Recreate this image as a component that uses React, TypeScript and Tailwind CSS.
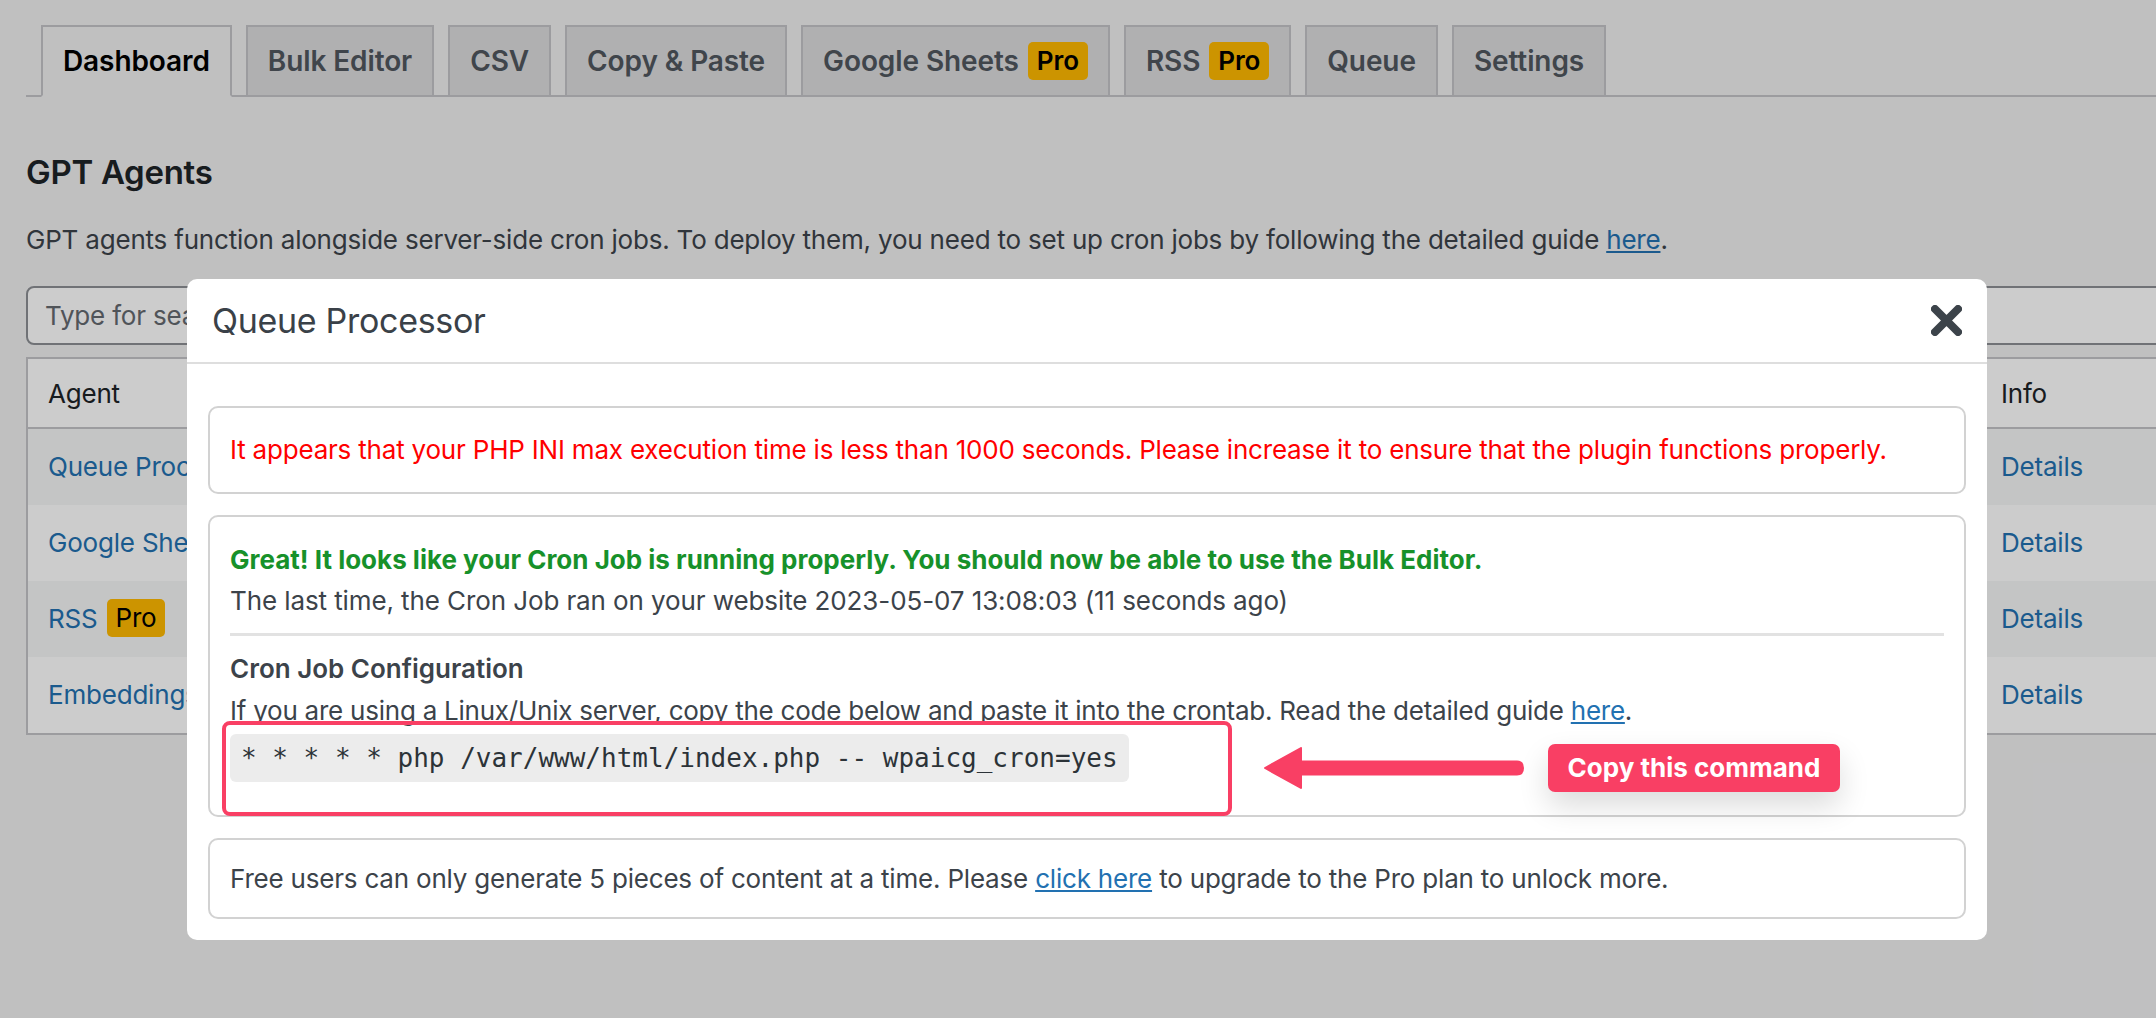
import React from "react";

function ProBadge({ className = "", weight = "font-semibold" }: { className?: string; weight?: string }) {
  return (
    <span
      className={
        "inline-flex h-[38px] items-center rounded-[5px] bg-[#ffb900] px-[9px] text-[26px] leading-none text-black " +
        weight +
        " " +
        className
      }
    >
      Pro
    </span>
  );
}

function Tab({ label, active = false, pro = false }: { label: string; active?: boolean; pro?: boolean }) {
  return (
    <div
      className={
        "-mb-[2px] flex h-[72px] items-center border-2 px-[20px] text-[28px] font-semibold leading-[48px] tracking-[-0.1px] " +
        (active
          ? "border-[#c3c4c7] border-b-[#f0f0f1] bg-[#f0f0f1] text-black"
          : "border-[#c3c4c7] bg-[#dcdcde] text-[#50575e]")
      }
    >
      <span>{label}</span>
      {pro && <ProBadge className="ml-[9px]" />}
    </div>
  );
}

const rows: { name: string; pro?: boolean }[] = [
  { name: "Queue Processor" },
  { name: "Google Sheets" },
  { name: "RSS", pro: true },
  { name: "Embeddings" },
];

export default function App() {
  return (
    <div className="relative h-[1018px] w-full overflow-hidden bg-[#f0f0f1] font-['Inter',sans-serif] text-[26px] tracking-[-0.2px] text-[#3c434a]">
      {/* WordPress admin page */}
      <div className="pl-[26px] pt-[25px]">
        <nav className="flex gap-[14px] border-b-2 border-[#c3c4c7] pl-[15px]">
          <Tab label="Dashboard" active />
          <Tab label="Bulk Editor" />
          <Tab label="CSV" />
          <Tab label="Copy & Paste" />
          <Tab label="Google Sheets" pro />
          <Tab label="RSS" pro />
          <Tab label="Queue" />
          <Tab label="Settings" />
        </nav>

        <h1 className="mt-[55px] text-[33px] font-semibold leading-[40px] tracking-[-0.3px] text-[#1d2327]">
          GPT Agents
        </h1>
        <p className="mt-[28px] leading-[40px] text-[#3c434a]">
          GPT agents function alongside server-side cron jobs. To deploy them, you need to set up cron jobs by following
          the detailed guide <a className="text-[#2271b1] underline">here</a>.
        </p>

        <div className="mt-[26px] flex h-[59px] w-[calc(100%+20px)] items-center rounded-[8px] border-2 border-[#8c8f94] bg-white px-[17px] text-[#646970]">
          Type for search...
        </div>

        <div className="mt-[12px] w-[calc(100%+20px)] border-2 border-[#c3c4c7] bg-white">
          <div className="grid h-[70px] grid-cols-[1953px_1fr] items-center border-b-2 border-[#c3c4c7] text-[#1d2327]">
            <div className="px-[20px]">Agent</div>
            <div className="px-[20px]">Info</div>
          </div>
          {rows.map((r, i) => (
            <div
              key={r.name}
              className={
                "grid h-[76px] grid-cols-[1953px_1fr] items-center " + (i % 2 === 0 ? "bg-[#f6f7f7]" : "bg-white")
              }
            >
              <div className="flex items-center px-[20px] pb-[2px] text-[#2271b1]">
                <span>{r.name}</span>
                {r.pro && <ProBadge className="ml-[9px]" weight="font-normal" />}
              </div>
              <div className="px-[20px] pb-[2px] text-[#2271b1]">Details</div>
            </div>
          ))}
        </div>
      </div>

      {/* dim overlay */}
      <div className="absolute inset-0 bg-black/20" />

      {/* Modal */}
      <div className="absolute left-[187px] top-[279px] w-[1800px] rounded-[10px] bg-white">
        <div className="flex h-[85px] items-center justify-between border-b-2 border-[#dedede] px-[25px]">
          <h2 className="text-[34px] font-normal leading-none tracking-[-0.3px] text-[#3a4148]">Queue Processor</h2>
          <svg width="31" height="31" viewBox="0 0 31 31" className="text-[#3c434a]">
            <path d="M4 4 L27 27 M27 4 L4 27" stroke="currentColor" strokeWidth="8" strokeLinecap="round" fill="none" />
          </svg>
        </div>

        <div className="flex flex-col gap-[21px] px-[21px] pb-[21px] pt-[42px]">
          <div className="rounded-[10px] border-2 border-[#d2d2d2] px-[20px] py-[24px] leading-[36px] text-[#ff0000]">
            It appears that your PHP INI max execution time is less than 1000 seconds. Please increase it to ensure that
            the plugin functions properly.
          </div>

          <div className="relative rounded-[10px] border-2 border-[#d2d2d2] px-[20px] pb-[33px] pt-[25px] leading-[36px]">
            <div className="font-bold tracking-normal text-[#17912a]">
              Great! It looks like your Cron Job is running properly. You should now be able to use the Bulk Editor.
            </div>
            <div className="mt-[5px] tracking-[-0.1px]">
              The last time, the Cron Job ran on your website 2023-05-07 13:08:03 (11 seconds ago)
            </div>
            <div className="mt-[14px] h-[3px] bg-[#e2e2e2]" />
            <div className="mt-[15px] font-semibold tracking-normal text-[#3c434a]">Cron Job Configuration</div>
            <div className="mt-[6px] tracking-[-0.24px]">
              If you are using a Linux/Unix server, copy the code below and paste it into the crontab. Read the detailed
              guide <a className="text-[#2271b1] underline">here</a>.
            </div>
            <div className="mt-[5px] inline-flex h-[48px] items-center rounded-[6px] bg-[#ececec] px-[11px] font-['DejaVu_Sans_Mono',monospace] text-[26px] tracking-normal text-[#2c3338]">
              * * * * * php /var/www/html/index.php -- wpaicg_cron=yes
            </div>

            {/* annotation: red box */}
            <div className="pointer-events-none absolute left-[12px] top-[204px] h-[95px] w-[1010px] rounded-[8px] border-4 border-[#f93f64]" />
            {/* annotation: arrow */}
            <svg className="absolute left-[1053px] top-[230px]" width="262" height="42" viewBox="0 0 262 42">
              <path
                d="M2 21 L38 1 L38 14.5 L254 14.5 Q260 14.5 260 21 Q260 27.5 254 27.5 L38 27.5 L38 41 Z"
                fill="#f93f64"
                stroke="#f93f64"
                strokeWidth="2"
                strokeLinejoin="round"
              />
            </svg>
            {/* annotation: label */}
            <div className="absolute left-[1338px] top-[227px] flex h-[48px] w-[292px] items-center justify-center rounded-[7px] bg-[#f93f64] text-[26px] font-bold tracking-normal text-white shadow-[0_14px_30px_rgba(0,0,0,0.14)]">
              Copy this command
            </div>
          </div>

          <div className="rounded-[10px] border-2 border-[#d2d2d2] px-[20px] py-[20px] leading-[37px]">
            Free users can only generate 5 pieces of content at a time. Please{" "}
            <a className="text-[#2271b1] underline">click here</a> to upgrade to the Pro plan to unlock more.
          </div>
        </div>
      </div>
    </div>
  );
}
